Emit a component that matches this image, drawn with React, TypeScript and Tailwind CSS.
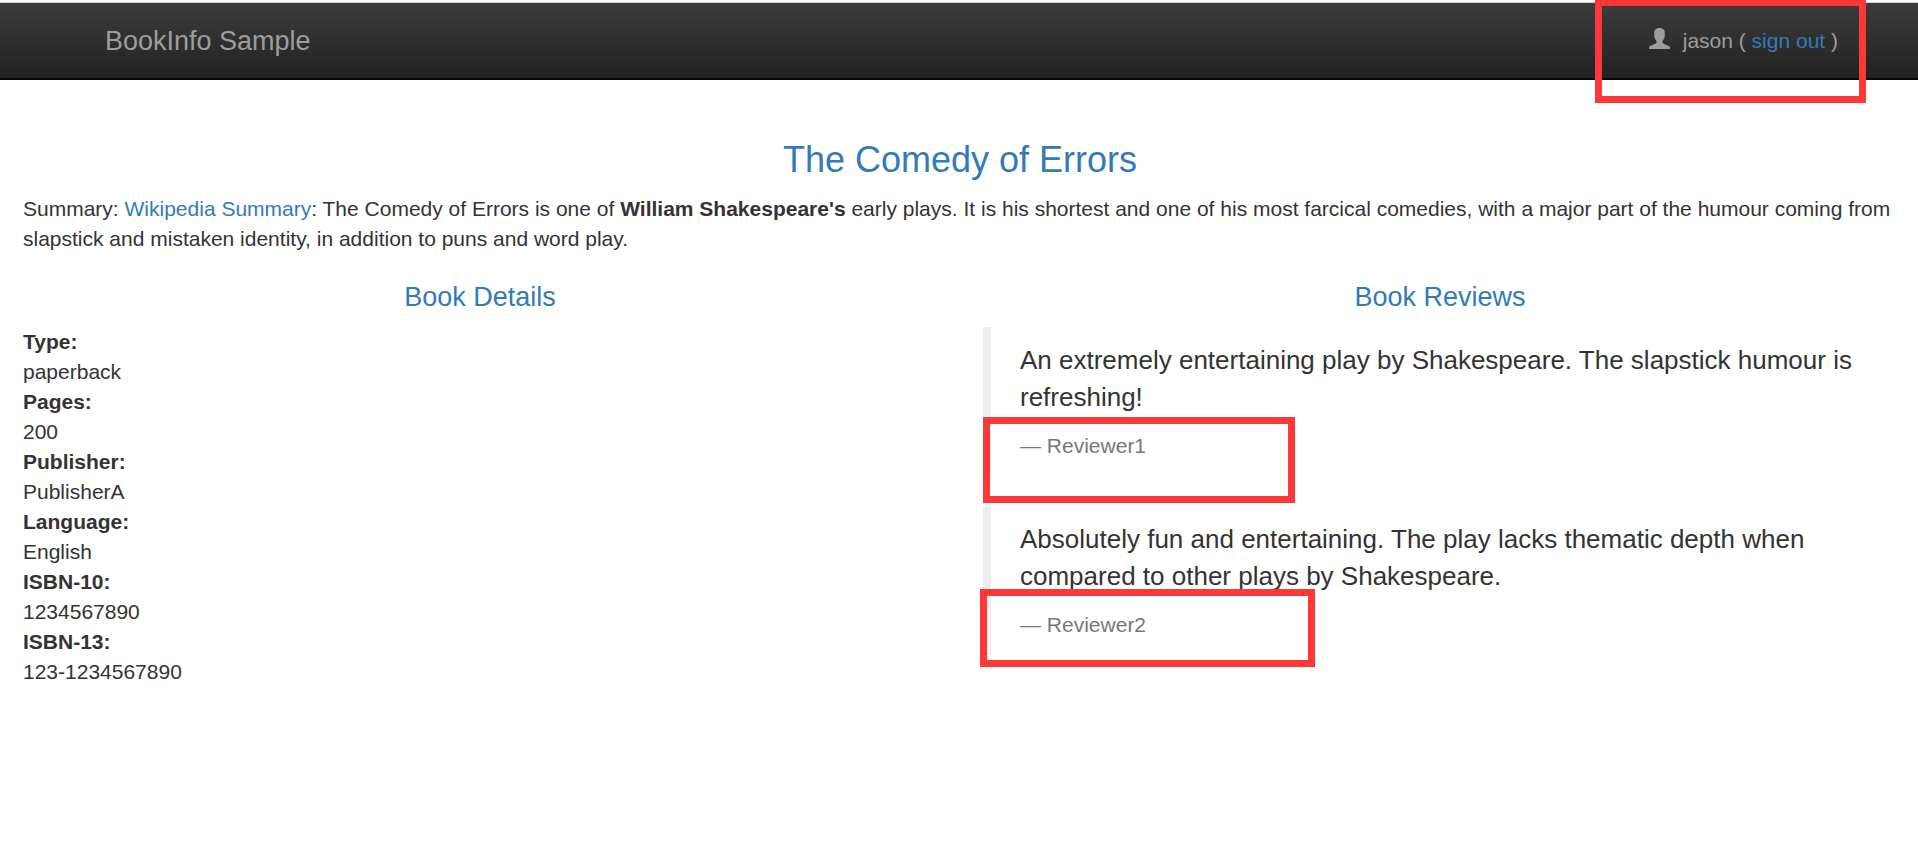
import type { ReactNode } from "react";

const details = [
  { label: "Type:", value: "paperback" },
  { label: "Pages:", value: "200" },
  { label: "Publisher:", value: "PublisherA" },
  { label: "Language:", value: "English" },
  { label: "ISBN-10:", value: "1234567890" },
  { label: "ISBN-13:", value: "123-1234567890" },
];

function UserIcon() {
  return (
    <svg
      viewBox="0 0 21 21"
      className="mr-[13px] mb-1 h-[21px] w-[21px]"
      fill="currentColor"
      aria-hidden="true"
    >
      <path d="M10.500 0C7.300 0 5.200 1.700 5.200 5v2.500c0 2.300.9 4 2.300 5.400v1.600c0 .5-.3.800-.8 1L1.200 18C.4 18.400 0 18.800 0 19.600V21h21v-1.400c0-.8-.4-1.200-1.200-1.600l-5.500-2.500c-.5-.2-.8-.5-.8-1v-1.600c1.400-1.400 2.300-3.100 2.300-5.400V5c0-3.300-2.100-5-5.300-5z" />
    </svg>
  );
}

function Highlight({ className }: { className: string }) {
  return (
    <div
      aria-hidden="true"
      className={`pointer-events-none absolute border-[7px] border-[#fc3838] ${className}`}
    />
  );
}

function Review({
  text,
  author,
  children,
}: {
  text: string;
  author: string;
  children: ReactNode;
}) {
  return (
    <blockquote className="relative mb-[30px] border-l-8 border-[#eeeeee] py-[15px] pr-[30px] pl-[29px]">
      <p className="mb-[15px] text-[26px] leading-[37px]">{text}</p>
      <footer className="text-[#777777]">— {author}</footer>
      {children}
    </blockquote>
  );
}

export default function App() {
  return (
    <div className="bg-white font-['Liberation_Sans',Arial,sans-serif] text-[21px] leading-[30px] text-[#333333]">
      <header className="relative pt-0.5">
        <nav className="flex h-[78px] items-center justify-between border-t border-b-2 border-t-[#d5d5d8] border-b-[#080808] bg-linear-to-b from-[#3c3c3c] to-[#222222] pr-20 pl-[105px] text-[#9d9d9d]">
          <a href="#" className="text-[27px]">
            BookInfo Sample
          </a>
          <div className="flex items-center">
            <UserIcon />
            <span>
              jason ({" "}
              <a href="#logout" className="text-[#337ab7]">
                sign out
              </a>{" "}
              )
            </span>
          </div>
        </nav>
        <Highlight className="top-[-1px] right-[52px] h-[104px] w-[271px]" />
      </header>

      <main className="pt-[60px] pr-[21px] pl-[23px]">
        <h3 className="mb-[14px] text-center text-[36px] leading-[40px] text-[#337ab7]">
          The Comedy of Errors
        </h3>
        <p>
          Summary:{" "}
          <a href="#summary" className="text-[#337ab7]">
            Wikipedia Summary
          </a>
          : The Comedy of Errors is one of <b>William Shakespeare's</b> early
          plays. It is his shortest and one of his most farcical comedies, with
          a major part of the humour coming from slapstick and mistaken
          identity, in addition to puns and word play.
        </p>

        <div className="mt-7 grid grid-cols-2 gap-[46px]">
          <section>
            <h4 className="mb-[15px] text-center text-[27px] text-[#337ab7]">
              Book Details
            </h4>
            <dl>
              {details.map(({ label, value }) => (
                <div key={label}>
                  <dt className="font-bold">{label}</dt>
                  <dd>{value}</dd>
                </div>
              ))}
            </dl>
          </section>

          <section>
            <h4 className="mb-[15px] text-center text-[27px] text-[#337ab7]">
              Book Reviews
            </h4>
            <Review
              text="An extremely entertaining play by Shakespeare. The slapstick humour is refreshing!"
              author="Reviewer1"
            >
              <Highlight className="top-[90px] left-[-8px] h-[86px] w-[312px]" />
            </Review>
            <Review
              text="Absolutely fun and entertaining. The play lacks thematic depth when compared to other plays by Shakespeare."
              author="Reviewer2"
            >
              <Highlight className="top-[83px] left-[-11px] h-[78px] w-[335px]" />
            </Review>
          </section>
        </div>
      </main>
    </div>
  );
}
